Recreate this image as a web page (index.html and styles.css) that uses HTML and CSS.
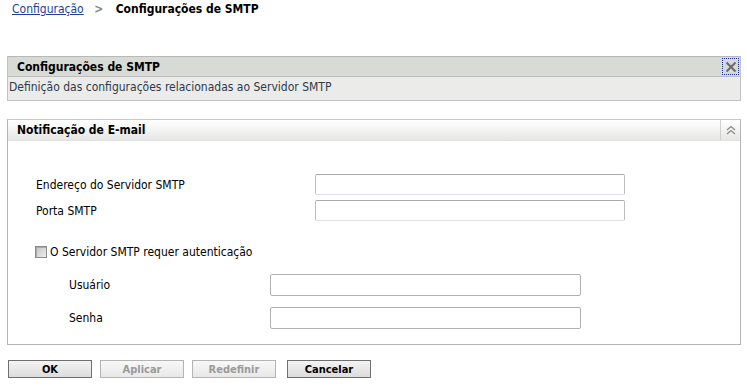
FILE: index.html
```html
<!DOCTYPE html>
<html lang="pt">
  <head>
    <meta charset="UTF-8" />
    <title>Configurações de SMTP</title>
    <link rel="stylesheet" href="styles.css">
  </head>
  <body>
    <!-- Breadcrumb -->
    <div class="crumbs">
      <a href="#">Configuração</a>
      <span class="sep">&gt;</span>
      <span class="current">Configurações de SMTP</span>
    </div>

    <!-- Page header -->
    <div class="page-head">
      <div class="page-title">
        <span>Configurações de SMTP</span>
        <button class="close" title="Fechar">
          <svg width="12" height="12" viewBox="0 0 12 12">
            <path d="M1.5 1.5 L10.5 10.5 M10.5 1.5 L1.5 10.5" stroke="#6a6a6a" stroke-width="2" />
          </svg>
        </button>
      </div>
      <div class="page-desc">Definição das configurações relacionadas ao Servidor SMTP</div>
    </div>

    <!-- E-mail notification panel -->
    <div class="panel">
      <div class="panel-head">
        <span>Notificação de E-mail</span>
        <div class="collapse">
          <svg width="10" height="10" viewBox="0 0 10 10">
            <path d="M1 5 L5 1.5 L9 5 M1 9 L5 5.5 L9 9" stroke="#8a8a8a" stroke-width="1.3" fill="none" />
          </svg>
        </div>
      </div>
      <div class="panel-body">
        <div class="row">
          <label for="host">Endereço do Servidor SMTP</label>
          <input type="text" id="host" />
        </div>
        <div class="row">
          <label for="port">Porta SMTP</label>
          <input type="text" id="port" />
        </div>

        <div class="check">
          <input type="checkbox" id="auth" />
          <label for="auth">O Servidor SMTP requer autenticação</label>
        </div>

        <div class="auth">
          <div class="row">
            <label for="user">Usuário</label>
            <input type="text" id="user" />
          </div>
          <div class="row">
            <label for="pass">Senha</label>
            <input type="password" id="pass" />
          </div>
        </div>
      </div>
    </div>

    <div class="actions">
      <button class="btn">OK</button>
      <button class="btn" disabled>Aplicar</button>
      <button class="btn" disabled>Redefinir</button>
      <button class="btn cancel">Cancelar</button>
    </div>
  </body>
</html>
```

FILE: styles.css
```css
body {
  font-family: Tahoma, "DejaVu Sans Condensed", "DejaVu Sans", sans-serif;
  font-size: 12px;
  color: #000;
  margin: 0;
  padding: 0 6px 0 7px;
  background-color: #fff;
}
.crumbs {
  padding: 1px 0 0 5px;
  height: 22px;
  line-height: 16px;
}
.crumbs a {
  color: #1d3f9b;
}
.crumbs .sep {
  color: #888;
  font-weight: bold;
  margin: 0 9px 0 7px;
}
.crumbs .current {
  font-weight: bold;
}
.page-head {
  margin-top: 33px;
  border: 1px solid #c2c2c2;
  border-top-color: #b8b8b8;
}
.page-title {
  display: flex;
  justify-content: space-between;
  align-items: center;
  height: 19px;
  padding-left: 9px;
  background-color: #d8dad5;
  border-bottom: 1px solid #bcbcbc;
  font-weight: bold;
}
.close {
  width: 17px;
  height: 17px;
  margin-right: 1px;
  padding: 0;
  display: flex;
  align-items: center;
  justify-content: center;
  border: 1px dotted #1a2c8c;
  background: transparent;
}
.page-desc {
  background-color: #ebebea;
  height: 23px;
  line-height: 21px;
  padding-left: 1px;
  color: #2d3a4a;
}
.panel {
  margin-top: 18px;
  border: 1px solid #b5b5b5;
  border-top-color: #c9c9c9;
}
.panel-head {
  display: flex;
  justify-content: space-between;
  height: 20px;
  line-height: 20px;
  padding-left: 9px;
  font-weight: bold;
  background: linear-gradient(#ffffff, #e6e7e5);
  border-bottom: 1px solid #e0e0e0;
}
.collapse {
  width: 19px;
  border-left: 1px solid #cfcfcf;
  display: flex;
  align-items: center;
  justify-content: center;
}
.panel-body {
  padding: 33px 0 15px 28px;
}
.row {
  display: flex;
  align-items: center;
  margin-bottom: 5px;
}
.row label {
  width: 279px;
}
.row input {
  width: 310px;
  height: 21px;
  box-sizing: border-box;
  border: 1px solid #bdbdbd;
  border-top-color: #a9a9a9;
  border-bottom-color: #dfe3e8;
  border-radius: 2px;
}
.check {
  display: flex;
  align-items: center;
  margin-top: 24px;
  margin-left: -1px;
}
.check input {
  appearance: none;
  margin: 0 3px 0 0;
  width: 12px;
  height: 12px;
  border: 1px solid #8c8c8c;
  background: linear-gradient(135deg, #c4c4c4, #ececec);
  box-shadow: inset 1px 1px 0 #a8a8a8;
}
.auth {
  margin-top: 15px;
  padding-left: 33px;
}
.auth .row {
  margin-bottom: 11px;
}
.auth .row:last-child {
  margin-bottom: 0;
}
.auth .row label {
  width: 201px;
}
.auth .row input {
  width: 311px;
  height: 22px;
  border: 1px solid #b0b0b0;
}
.actions {
  margin-top: 15px;
  display: flex;
  gap: 8px;
  padding-left: 1px;
}
.btn {
  width: 84px;
  height: 18px;
  padding: 0;
  font-family: Tahoma, "DejaVu Sans Condensed", "DejaVu Sans", sans-serif;
  font-size: 11px;
  font-weight: bold;
  color: #000;
  border: 1px solid #6f6f6f;
  background: linear-gradient(#f4f4f4, #dcdcdc);
}
.btn:disabled {
  color: #9a9a9a;
  border-color: #b4b4b4;
  background: linear-gradient(#f8f8f8, #e8e8e8);
}
.cancel {
  margin-left: 3px;
}
```
